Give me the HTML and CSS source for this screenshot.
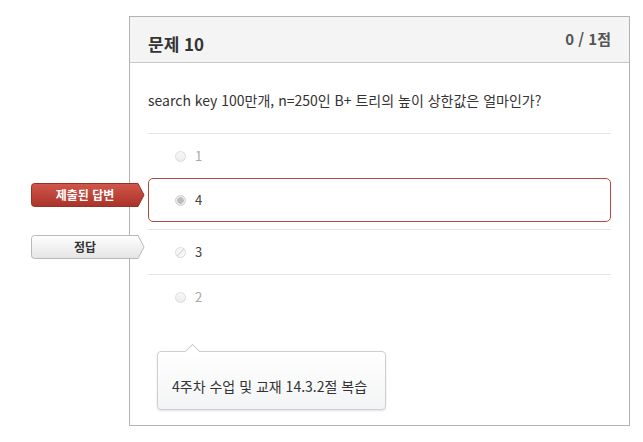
FILE: index.html
```html
<!DOCTYPE html>
<html lang="ko">
<head>
    <meta charset="UTF-8">
    <meta name="viewport" content="width=device-width, initial-scale=1.0">
    <title>문제 10</title>
    <link rel="stylesheet" href="styles.css">
</head>
<body>
    <div class="quiz-card">
        <div class="quiz-header">
            <h2 class="quiz-title">문제 10</h2>
            <div class="quiz-score">0 / 1점</div>
        </div>
        <div class="quiz-body">
            <p class="question">search key 100만개, n=250인 B+ 트리의 높이 상한값은 얼마인가?</p>
            <div class="answers">
                <div class="answer muted">
                    <span class="radio"></span>
                    <span class="answer-text">1</span>
                </div>
                <div class="answer selected">
                    <div class="flag flag-red">
                        <svg class="flag-shape" width="114" height="24" viewBox="0 0 114 24">
                            <defs>
                                <linearGradient id="redFill" x1="0" y1="0" x2="0" y2="1">
                                    <stop offset="0" stop-color="#d2574a"/>
                                    <stop offset="1" stop-color="#a9322a"/>
                                </linearGradient>
                            </defs>
                            <path d="M3.5 0.5H107L113 12L107 23.5H3.5Q0.5 23.5 0.5 20.5V3.5Q0.5 0.5 3.5 0.5Z" fill="url(#redFill)" stroke="#98302a"/>
                        </svg>
                        <span class="flag-label">제출된 답변</span>
                    </div>
                    <span class="radio checked"></span>
                    <span class="answer-text">4</span>
                </div>
                <div class="answer">
                    <div class="flag flag-grey">
                        <svg class="flag-shape" width="114" height="24" viewBox="0 0 114 24">
                            <defs>
                                <linearGradient id="greyFill" x1="0" y1="0" x2="0" y2="1">
                                    <stop offset="0" stop-color="#ffffff"/>
                                    <stop offset="1" stop-color="#e4e4e4"/>
                                </linearGradient>
                            </defs>
                            <path d="M3.5 0.5H107L113 12L107 23.5H3.5Q0.5 23.5 0.5 20.5V3.5Q0.5 0.5 3.5 0.5Z" fill="url(#greyFill)" stroke="#b9b9b9"/>
                        </svg>
                        <span class="flag-label">정답</span>
                    </div>
                    <span class="radio slashed"></span>
                    <span class="answer-text">3</span>
                </div>
                <div class="answer muted">
                    <span class="radio"></span>
                    <span class="answer-text">2</span>
                </div>
            </div>
            <div class="comment">4주차 수업 및 교재 14.3.2절 복습</div>
        </div>
    </div>
</body>
</html>
```

FILE: styles.css
```css
body {
    font-family: "Noto Sans CJK KR", "Noto Sans", sans-serif;
    margin: 0;
    padding: 16px 0 0 129px;
    background-color: #fff;
    color: #333;
}
.quiz-card {
    width: 499px;
    border: 1px solid #b3b3b3;
}
.quiz-header {
    display: flex;
    justify-content: space-between;
    align-items: flex-start;
    height: 45px;
    padding: 0 18px;
    background-color: #f4f4f4;
    border-bottom: 1px solid #c8c8c8;
}
.quiz-title {
    margin: 12px 0 0;
    font-size: 17px;
    font-weight: 700;
    line-height: 30px;
    color: #333;
}
.quiz-score {
    margin-top: 10px;
    font-size: 15px;
    font-weight: 700;
    line-height: 24px;
    color: #555;
}
.quiz-body {
    padding: 0 18px 15px;
}
.question {
    margin: 0;
    padding: 24px 0 20px;
    font-size: 14px;
    line-height: 26px;
    color: #333;
}
.answer {
    position: relative;
    display: flex;
    align-items: center;
    height: 44px;
    padding-left: 27px;
    border-top: 1px solid #e6e6e6;
    font-size: 13px;
    color: #444;
}
.answer.muted {
    color: #a8a8a8;
}
.answer.selected {
    height: 42px;
    padding-left: 26px;
    margin-bottom: 7px;
    border: 1px solid #b24a3d;
    border-radius: 5px;
}
.radio {
    width: 9px;
    height: 9px;
    margin-right: 9px;
    border: 1px solid #dcdcdc;
    border-radius: 50%;
    background: linear-gradient(#f8f8f8, #ececec);
}
.radio.checked {
    background: radial-gradient(circle, #bdbdbd 0, #bdbdbd 3px, #ececec 3.5px);
    border-color: #d0d0d0;
}
.radio.slashed {
    background: linear-gradient(135deg, #f6f6f6 44%, #d6d6d6 46%, #d6d6d6 54%, #f6f6f6 56%);
}
.answer-text {
    line-height: 20px;
}
.flag {
    position: absolute;
    left: -117px;
    top: 5px;
    width: 114px;
    height: 24px;
    display: flex;
    align-items: center;
    justify-content: center;
    padding-right: 6px;
    box-sizing: border-box;
}
.answer.selected .flag {
    left: -118px;
    top: 4px;
}
.flag-shape {
    position: absolute;
    left: 0;
    top: 0;
}
.flag-label {
    position: relative;
    font-size: 12px;
    font-weight: 700;
    line-height: 16px;
}
.flag-red .flag-label {
    color: #fff;
}
.flag-grey .flag-label {
    color: #333;
}
.comment {
    position: relative;
    width: 199px;
    margin: 32px 0 0 9px;
    padding: 24px 14px 13px;
    border: 1px solid #cfcfcf;
    border-radius: 4px;
    background: linear-gradient(#ffffff, #f3f4f5);
    box-shadow: 0 1px 2px rgba(0, 0, 0, 0.12);
    font-size: 14px;
    line-height: 20px;
    color: #333;
}
.comment::before {
    content: "";
    position: absolute;
    left: 29px;
    top: -6px;
    width: 10px;
    height: 10px;
    background: #fff;
    border-top: 1px solid #cfcfcf;
    border-left: 1px solid #cfcfcf;
    transform: rotate(45deg);
}
```
